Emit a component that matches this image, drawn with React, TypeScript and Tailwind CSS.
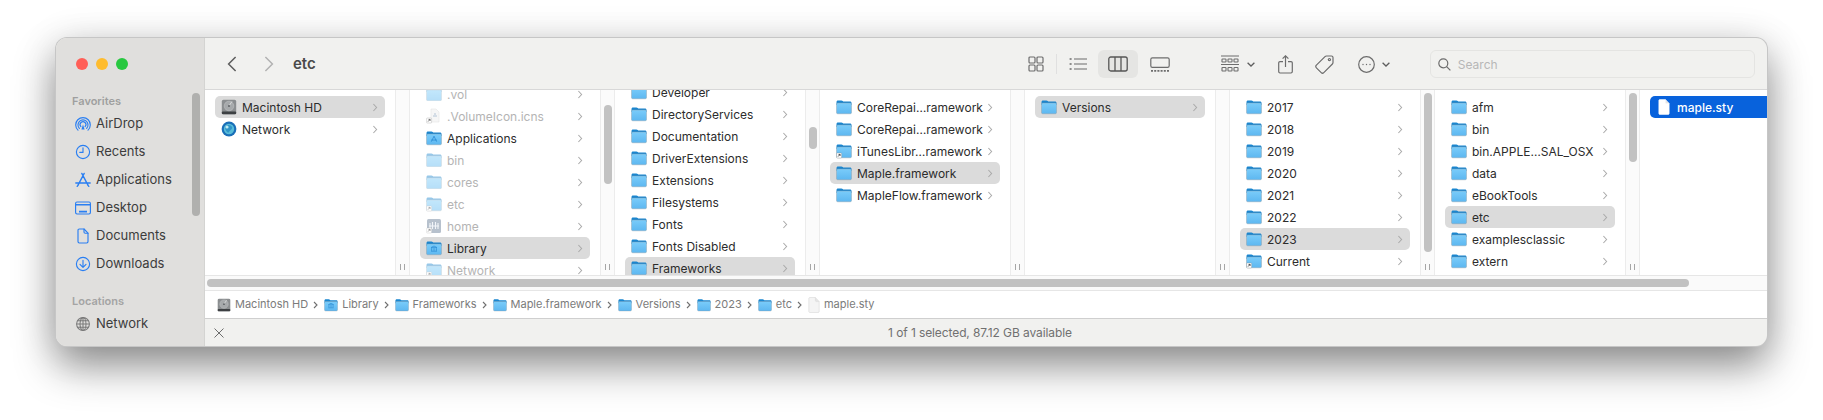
import React from "react";

const FONT = "[font-family:Inter,'Noto_Sans',sans-serif]";

function Folder({ kind = "plain", dim = false, size = 16 }: { kind?: string; dim?: boolean; size?: number }) {
  return (
    <svg width={size} height={size} viewBox="0 0 16 16" className={`shrink-0 ${dim ? "opacity-45" : ""}`}>
      <defs>
        <linearGradient id="fbody" x1="0" y1="0" x2="0" y2="1">
          <stop offset="0" stopColor="#7accfa" />
          <stop offset="1" stopColor="#5db7f0" />
        </linearGradient>
      </defs>
      <path d="M0.5 3C0.5 2.1 1.1 1.4 2 1.4H5.4C6 1.4 6.3 1.7 6.7 2.1L7.2 2.6H14C14.9 2.6 15.5 3.2 15.5 4V6H0.5Z" fill="#1a86cf" />
      <rect x="0.5" y="4" width="15" height="10.8" rx="1.3" fill="url(#fbody)" stroke="#8d99a2" strokeWidth="0.4" />
      {kind === "apps" && <path d="M8 6.2L5.4 11.6M8 6.2L10.6 11.6M5.2 10H10.8" stroke="#2f8fd6" strokeWidth="0.9" fill="none" />}
      {kind === "library" && <path d="M5 7.6H11L8 6ZM5.6 8.2V10.8M8 8.2V10.8M10.4 8.2V10.8M5 11.2H11" stroke="#2f8fd6" strokeWidth="0.8" fill="none" />}
      {kind === "alias" && (
        <>
          <rect x="0.6" y="10" width="5" height="5" rx="0.7" fill="#fff" stroke="#777" strokeWidth="0.3" />
          <path d="M2 13.6L4 11.4M2.5 11.4H4.1V13" stroke="#222" strokeWidth="0.7" fill="none" />
        </>
      )}
    </svg>
  );
}

function Home() {
  return (
    <svg width="16" height="16" viewBox="0 0 16 16" className="shrink-0 opacity-55">
      <rect x="1" y="1" width="14" height="14" rx="1.5" fill="#7d8fa6" />
      <path d="M4 5V11M6.5 4V11M9.5 4V11M12 5V11M3 8H13" stroke="#e8eef5" strokeWidth="1.1" />
      <rect x="0.6" y="10" width="5" height="5" rx="0.7" fill="#fff" stroke="#777" strokeWidth="0.3" />
      <path d="M2 13.6L4 11.4M2.5 11.4H4.1V13" stroke="#222" strokeWidth="0.7" fill="none" />
    </svg>
  );
}

function Hd({ size = 16 }: { size?: number }) {
  return (
    <svg width={size} height={size} viewBox="0 0 16 16" className="shrink-0">
      <rect x="0.8" y="0.8" width="14.4" height="14.4" rx="1.6" fill="#8b8e90" />
      <rect x="0.8" y="12.6" width="14.4" height="2.6" rx="1" fill="#3d4043" />
      <circle cx="8" cy="7" r="4.8" fill="#a6a9ab" stroke="#c4c6c8" strokeWidth="0.5" />
      <path d="M8 7L11 2.4" stroke="#ececec" strokeWidth="0.7" />
      <circle cx="8" cy="7" r="1.1" fill="#63666a" />
    </svg>
  );
}

function Globe() {
  return (
    <svg width="16" height="16" viewBox="0 0 16 16" className="shrink-0">
      <circle cx="8" cy="8" r="7.4" fill="#1a6fb8" />
      <circle cx="8" cy="8" r="5.2" fill="#58bcd8" />
      <path d="M4 6C6 3 10 4 11 6S9 9 8 11 4 9 4 6Z" fill="#2f94c8" />
      <circle cx="6" cy="6" r="1.6" fill="#bfeaf0" />
    </svg>
  );
}

function Doc({ fill = "#f4f4f4", stroke = "#d2d2d2" }: { fill?: string; stroke?: string }) {
  return (
    <svg width={12} height={16} viewBox="0 0 12 16" className="shrink-0">
      <path d="M0.8 1.6C0.8 1 1.2 0.5 1.8 0.5H7.4L11.2 4.6V14.4C11.2 15 10.8 15.5 10.2 15.5H1.8C1.2 15.5 0.8 15 0.8 14.4Z" fill={fill} stroke={stroke} strokeWidth="0.5" />
      <path d="M7.4 0.5V3.6C7.4 4.2 7.8 4.6 8.4 4.6H11.2" fill="#e4e4e4" stroke={stroke} strokeWidth="0.4" />
    </svg>
  );
}

function VolIcon() {
  return (
    <svg width="16" height="16" viewBox="0 0 16 16" className="shrink-0 opacity-80">
      <path d="M5 1H10L13 4V14H5Z" fill="#f5f5f5" stroke="#d0d0d0" strokeWidth="0.4" />
      <path d="M7 8H11M8 6H10" stroke="#8aa4c0" strokeWidth="0.8" />
      <rect x="0.6" y="10" width="5" height="5" rx="0.7" fill="#fff" stroke="#777" strokeWidth="0.3" />
      <path d="M2 13.6L4 11.4M2.5 11.4H4.1V13" stroke="#222" strokeWidth="0.7" fill="none" />
    </svg>
  );
}

function Chevron() {
  return (
    <svg width="6" height="9" viewBox="0 0 6 9" className="shrink-0">
      <path d="M1.4 1L4.6 4.5L1.4 8" fill="none" stroke="#a9a9a9" strokeWidth="1.05" />
    </svg>
  );
}

type Item = { name: string; icon?: string; dim?: boolean; sel?: boolean };

function Row({ item }: { item: Item }) {
  const { name, icon = "plain", dim, sel } = item;
  return (
    <div className={`mx-[10px] flex h-[22px] shrink-0 items-center rounded-[5px] pl-[6px] pr-[7px] ${sel ? "bg-[#dbdbdb]" : ""}`}>
      {icon === "hd" ? <Hd /> : icon === "globe" ? <Globe /> : icon === "home" ? <Home /> : icon === "vol" ? <VolIcon /> : <Folder kind={icon} dim={dim} />}
      <span className={`ml-[5px] flex-1 whitespace-nowrap text-[12px] leading-[21px] ${dim ? "text-[#b4b4b4]" : "text-[#2c2c2c]"}`}>{name}</span>
      <Chevron />
    </div>
  );
}

function Strip({ thumb }: { thumb?: string }) {
  return (
    <div className="flex h-full w-[15px] shrink-0 flex-col items-center border-x border-[#ececec] bg-[#fbfbfb]">
      {thumb && <div className={`w-[8px] shrink-0 rounded-full bg-[#c2c2c2] ${thumb}`} />}
      <div className="mt-auto mb-[5px] flex gap-[3px]">
        <div className="h-[6px] w-px bg-[#a6a6a6]" />
        <div className="h-[6px] w-px bg-[#a6a6a6]" />
      </div>
    </div>
  );
}

function Column({ items, offset, thumb }: { items: Item[]; offset: string; thumb?: string }) {
  return (
    <div className="flex h-full w-[205px] shrink-0">
      <div className="h-full w-[190px] shrink-0 overflow-hidden bg-white">
        <div className={`flex flex-col ${offset}`}>
          {items.map((it, i) => (
            <Row key={i} item={it} />
          ))}
        </div>
      </div>
      <Strip thumb={thumb} />
    </div>
  );
}

const stroke = { fill: "none", stroke: "#6d6d6d", strokeWidth: 1.2 };

function SideIcon({ name }: { name: string }) {
  const s = { fill: "none", stroke: "#2a7ff2", strokeWidth: 1.15, strokeLinecap: "round" as const, strokeLinejoin: "round" as const };
  return (
    <svg width="16" height="16" viewBox="0 0 16 16" className="shrink-0">
      {name === "airdrop" && (
        <g {...s}>
          <path d="M3 14.2A7.3 7.3 0 1 1 13 14.2" />
          <path d="M4.4 12.4A5 5 0 1 1 11.6 12.4" />
          <path d="M5.9 10.6A2.9 2.9 0 1 1 10.1 10.6" />
          <path d="M8 8.4L9.6 13.4H6.4Z" fill="#2a7ff2" stroke="none" />
        </g>
      )}
      {name === "clock" && (
        <g {...s}>
          <circle cx="8" cy="8" r="6.6" />
          <path d="M8 3.8V8.4H4.8" />
        </g>
      )}
      {name === "apps" && (
        <g {...s} strokeWidth="1.35">
          <path d="M9.2 1.4L3.3 12.6M6.8 1.4L12.7 12.6M0.8 11H15.2" />
          <path d="M2.2 14.4L3.3 12.8M13.8 14.4L12.7 12.8" />
        </g>
      )}
      {name === "desktop" && (
        <g {...s}>
          <rect x="0.6" y="2" width="14.8" height="12" rx="1.4" />
          <path d="M0.6 4.8H15.4" strokeWidth="1.6" />
          <path d="M4 11.6H12" strokeWidth="1.6" strokeLinecap="butt" />
        </g>
      )}
      {name === "doc" && (
        <g {...s}>
          <path d="M3 2.4C3 1.6 3.5 1 4.3 1H9L13 5.2V13.6C13 14.4 12.5 15 11.7 15H4.3C3.5 15 3 14.4 3 13.6Z" />
          <path d="M9 1V4C9 4.8 9.4 5.2 10.2 5.2H13" />
        </g>
      )}
      {name === "down" && (
        <g {...s}>
          <circle cx="8" cy="8" r="6.6" />
          <path d="M8 4.2V11.2M5 8.4L8 11.4L11 8.4" />
        </g>
      )}
      {name === "globe" && (
        <g fill="none" stroke="#7a7a7a" strokeWidth="1.05">
          <circle cx="8" cy="8" r="6.4" />
          <ellipse cx="8" cy="8" rx="3" ry="6.4" />
          <path d="M8 1.6V14.4M1.6 8H14.4M2.6 4.8H13.4M2.6 11.2H13.4" />
        </g>
      )}
    </svg>
  );
}

function SideRow({ icon, label }: { icon: string; label: string }) {
  return (
    <div className="flex h-[28px] items-center gap-[5px] pl-[19px] text-[13px] text-[#3c3c3c]">
      <SideIcon name={icon} />
      <span>{label}</span>
    </div>
  );
}

function Crumb({ icon, label, last }: { icon: React.ReactNode; label: string; last?: boolean }) {
  return (
    <div className="flex items-center">
      {icon}
      <span className="ml-[4px] text-[11px] leading-[15px] text-[#7b7b7b]">{label}</span>
      {!last && (
        <svg width="5" height="8" viewBox="0 0 5 8" className="ml-[5px] mr-[6px]">
          <path d="M1 1L4 4L1 7" fill="none" stroke="#6f6f6f" strokeWidth="1.1" />
        </svg>
      )}
    </div>
  );
}

const col2: Item[] = [
  { name: ".vol", dim: true },
  { name: ".VolumeIcon.icns", icon: "vol", dim: true },
  { name: "Applications", icon: "apps" },
  { name: "bin", dim: true },
  { name: "cores", dim: true },
  { name: "etc", icon: "alias", dim: true },
  { name: "home", icon: "home", dim: true },
  { name: "Library", icon: "library", sel: true },
  { name: "Network", icon: "alias", dim: true },
];
const col3: Item[] = [
  { name: "Developer" },
  { name: "DirectoryServices" },
  { name: "Documentation" },
  { name: "DriverExtensions" },
  { name: "Extensions" },
  { name: "Filesystems" },
  { name: "Fonts" },
  { name: "Fonts Disabled" },
  { name: "Frameworks", sel: true },
];
const col4: Item[] = [
  { name: "CoreRepai…ramework" },
  { name: "CoreRepai…ramework" },
  { name: "iTunesLibr…ramework", icon: "alias" },
  { name: "Maple.framework", sel: true },
  { name: "MapleFlow.framework" },
];
const col6: Item[] = [
  { name: "2017" },
  { name: "2018" },
  { name: "2019" },
  { name: "2020" },
  { name: "2021" },
  { name: "2022" },
  { name: "2023", sel: true },
  { name: "Current", icon: "alias" },
];
const col7: Item[] = [
  { name: "afm" },
  { name: "bin" },
  { name: "bin.APPLE…SAL_OSX" },
  { name: "data" },
  { name: "eBookTools" },
  { name: "etc", sel: true },
  { name: "examplesclassic" },
  { name: "extern" },
];

export default function App() {
  return (
    <div className={`h-[420px] w-[1823px] overflow-hidden bg-white pl-[56px] pt-[38px] ${FONT}`}>
      <div className="relative flex h-[308px] w-[1711px] overflow-hidden rounded-[11px] bg-[#f1f1ef] shadow-[0_0_0_1px_#c6c6c6,0_20px_42px_rgba(0,0,0,0.42),0_4px_40px_rgba(0,0,0,0.12)]">
        <aside className="relative w-[149px] shrink-0 border-r border-[#d4d4d2] bg-[#e0dfdd]">
          <div className="flex gap-[8px] pl-[20px] pt-[20px]">
            <div className="h-[12px] w-[12px] rounded-full bg-[#ff5f57]" />
            <div className="h-[12px] w-[12px] rounded-full bg-[#febc2e]" />
            <div className="h-[12px] w-[12px] rounded-full bg-[#28c840]" />
          </div>
          <div className="mt-[24px] pl-[16px] text-[11px] font-semibold leading-[14px] text-[#9f9f9f]">Favorites</div>
          <div className="mt-[2px]">
            <SideRow icon="airdrop" label="AirDrop" />
            <SideRow icon="clock" label="Recents" />
            <SideRow icon="apps" label="Applications" />
            <SideRow icon="desktop" label="Desktop" />
            <SideRow icon="doc" label="Documents" />
            <SideRow icon="down" label="Downloads" />
          </div>
          <div className="mt-[16px] pl-[16px] text-[11px] font-semibold leading-[14px] text-[#a4a4a4]">Locations</div>
          <div className="mt-[2px]">
            <SideRow icon="globe" label="Network" />
          </div>
          <div className="absolute right-[4px] top-[55px] h-[123px] w-[8px] rounded-full bg-[#b0b0ae]" />
        </aside>

        <main className="flex min-w-0 flex-1 flex-col">
          <header className="flex h-[52px] shrink-0 items-center border-b border-[#d8d8d8] pl-[22px] pt-[1px]">
            <svg width="10" height="16" viewBox="0 0 10 16">
              <path d="M8.6 1L1.6 8L8.6 15" fill="none" stroke="#5e5e5e" strokeWidth="1.5" />
            </svg>
            <svg width="10" height="16" viewBox="0 0 10 16" className="ml-[27px]">
              <path d="M1.4 1L8.4 8L1.4 15" fill="none" stroke="#b2b2b2" strokeWidth="1.5" />
            </svg>
            <span className="ml-[19px] text-[15px] font-semibold text-[#4a4a4a]">etc</span>

            <svg width="16" height="16" viewBox="0 0 16 16" className="ml-[712px]" {...stroke}>
              <rect x="1" y="1" width="6" height="6" rx="1" />
              <rect x="9" y="1" width="6" height="6" rx="1" />
              <rect x="1" y="9" width="6" height="6" rx="1" />
              <rect x="9" y="9" width="6" height="6" rx="1" />
            </svg>
            <div className="ml-[12px] h-[20px] w-px bg-[#e0e0e0]" />
            <svg width="18" height="14" viewBox="0 0 18 14" className="ml-[12px]" fill="none" stroke="#6d6d6d" strokeWidth="1.2">
              <path d="M5 2H18M5 7H18M5 12H18" />
              <path d="M0.6 2H2.6M0.6 7H2.6M0.6 12H2.6" strokeWidth="1.5" />
            </svg>
            <div className="ml-[11px] flex h-[28px] w-[40px] items-center justify-center rounded-[6px] bg-[#e5e5e3]">
              <svg width="20" height="16" viewBox="0 0 20 16" fill="none" stroke="#555" strokeWidth="1.3">
                <rect x="0.8" y="1" width="18.4" height="14" rx="2" />
                <path d="M7 1V15M13 1V15" />
              </svg>
            </div>
            <svg width="20" height="15" viewBox="0 0 20 15" className="ml-[12px]" fill="none" stroke="#6d6d6d" strokeWidth="1.2">
              <rect x="0.8" y="0.8" width="18.4" height="9.6" rx="1.6" />
              <path d="M1 13.8H19" strokeWidth="1.8" strokeDasharray="2 1.2" />
            </svg>

            <svg width="18" height="18" viewBox="0 0 18 18" className="ml-[51px]" fill="none" stroke="#6d6d6d" strokeWidth="1.1">
              <path d="M0 1H18M0 9.5H18" />
              <rect x="1" y="4" width="4" height="3" rx="0.6" />
              <rect x="7" y="4" width="4" height="3" rx="0.6" />
              <rect x="13" y="4" width="4" height="3" rx="0.6" />
              <rect x="1" y="12.5" width="4" height="3.5" rx="0.6" />
              <rect x="7" y="12.5" width="4" height="3.5" rx="0.6" />
              <rect x="13" y="12.5" width="4" height="3.5" rx="0.6" />
            </svg>
            <svg width="8" height="5" viewBox="0 0 8 5" className="ml-[8px]" fill="none" stroke="#5e5e5e" strokeWidth="1.3">
              <path d="M0.6 0.8L4 4L7.4 0.8" />
            </svg>
            <svg width="15" height="19" viewBox="0 0 15 19" className="ml-[23px]" fill="none" stroke="#6d6d6d" strokeWidth="1.2">
              <path d="M5 6.6H2C1.2 6.6 0.7 7.1 0.7 8V16.6C0.7 17.5 1.2 18 2 18H13C13.8 18 14.3 17.5 14.3 16.6V8C14.3 7.1 13.8 6.6 13 6.6H10" />
              <path d="M7.5 12V1M4.6 3.6L7.5 0.8L10.4 3.6" />
            </svg>
            <svg width="19" height="19" viewBox="0 0 19 19" className="ml-[22px]" fill="none" stroke="#6d6d6d" strokeWidth="1.2">
              <path d="M1.4 10.2L10 1.6C10.4 1.2 10.8 1 11.4 1H16.4C17.4 1 18 1.6 18 2.6V7.6C18 8.2 17.8 8.6 17.4 9L8.8 17.6C8 18.4 7 18.4 6.2 17.6L1.4 12.8C0.6 12 0.6 11 1.4 10.2Z" />
              <circle cx="14.4" cy="4.6" r="1.1" />
            </svg>
            <svg width="17" height="17" viewBox="0 0 17 17" className="ml-[24px]" fill="none" stroke="#6d6d6d" strokeWidth="1.2">
              <circle cx="8.5" cy="8.5" r="7.8" />
              <circle cx="5" cy="8.5" r="0.7" fill="#6d6d6d" stroke="none" />
              <circle cx="8.5" cy="8.5" r="0.7" fill="#6d6d6d" stroke="none" />
              <circle cx="12" cy="8.5" r="0.7" fill="#6d6d6d" stroke="none" />
            </svg>
            <svg width="8" height="5" viewBox="0 0 8 5" className="ml-[7px]" fill="none" stroke="#5e5e5e" strokeWidth="1.3">
              <path d="M0.6 0.8L4 4L7.4 0.8" />
            </svg>

            <div className="ml-[40px] flex h-[28px] w-[325px] items-center rounded-[6px] border border-[#e4e4e2] pl-[7px]">
              <svg width="13" height="13" viewBox="0 0 13 13" fill="none" stroke="#6d6d6d" strokeWidth="1.2">
                <circle cx="5.3" cy="5.3" r="4.5" />
                <path d="M8.6 8.6L12.4 12.4" />
              </svg>
              <span className="ml-[7px] pt-[2px] text-[12px] text-[#b7b7b7]">Search</span>
            </div>
          </header>

          <div className="flex h-[186px] shrink-0 overflow-hidden border-b border-[#e6e6e6] bg-white">
            <Column
              offset="pt-[6px]"
              items={[
                { name: "Macintosh HD", icon: "hd", sel: true },
                { name: "Network", icon: "globe" },
              ]}
            />
            <Column offset="-mt-[7px]" thumb="mt-[15px] h-[79px]" items={col2} />
            <Column offset="-mt-[9px]" thumb="mt-[37px] h-[22px]" items={col3} />
            <Column offset="pt-[6px]" items={col4} />
            <Column offset="pt-[6px]" items={[{ name: "Versions", sel: true }]} />
            <Column offset="pt-[6px]" thumb="mt-[3px] h-[159px]" items={col6} />
            <Column offset="pt-[6px]" thumb="mt-[3px] h-[69px]" items={col7} />
            <div className="w-[170px] shrink-0 pl-[10px] pt-[6px]">
              <div className="flex h-[22px] w-[170px] items-center rounded-[5px] bg-[#0862dc] pl-[8px]">
                <Doc fill="#ffffff" stroke="#ffffff" />
                <span className="ml-[7px] text-[12px] font-medium leading-[21px] text-white">maple.sty</span>
              </div>
            </div>
          </div>

          <div className="flex h-[15px] shrink-0 items-center border-b border-[#e6e6e6] bg-[#fafafa] pl-[2px]">
            <div className="h-[8px] w-[1482px] rounded-full bg-[#c1c1c1]" />
          </div>

          <div className="flex h-[28px] shrink-0 items-center border-b border-[#cfcfcf] bg-white pl-[12px]">
            <Crumb icon={<Hd size={14} />} label="Macintosh HD" />
            <Crumb icon={<Folder kind="library" size={14} />} label="Library" />
            <Crumb icon={<Folder size={14} />} label="Frameworks" />
            <Crumb icon={<Folder size={14} />} label="Maple.framework" />
            <Crumb icon={<Folder size={14} />} label="Versions" />
            <Crumb icon={<Folder size={14} />} label="2023" />
            <Crumb icon={<Folder size={14} />} label="etc" />
            <Crumb icon={<Doc />} label="maple.sty" last />
          </div>

          <footer className="relative flex flex-1 items-center justify-center pr-[12px] text-[12px] tracking-[-0.1px] text-[#707070]">
            <svg width="10" height="10" viewBox="0 0 10 10" className="absolute left-[9px] top-[9px]" fill="none" stroke="#6d6d6d" strokeWidth="1">
              <path d="M0.5 0.5L9.5 9.5M9.5 0.5L0.5 9.5" />
            </svg>
            1 of 1 selected, 87.12 GB available
          </footer>
        </main>
      </div>
    </div>
  );
}
